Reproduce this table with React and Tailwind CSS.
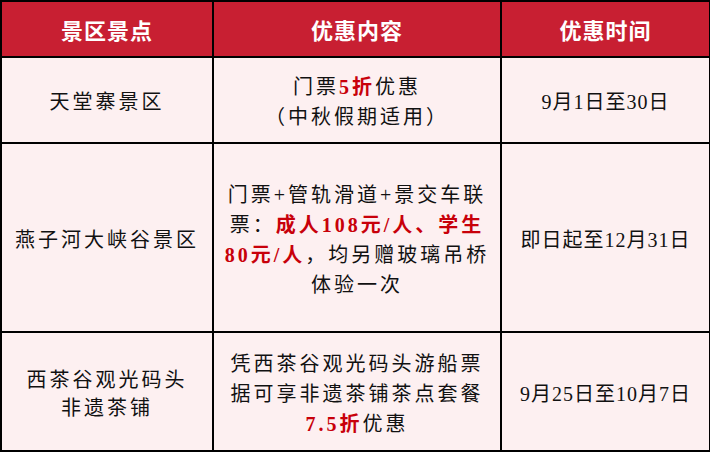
import React from "react";

const Red = ({ children }) => (
  <span className="font-bold text-[#c8000a]">{children}</span>
);

const rows = [
  {
    name: <>天堂寨景区</>,
    deal: (
      <>
        门票<Red>5折</Red>优惠
        <br />
        （中秋假期适用）
      </>
    ),
    time: "9月1日至30日",
    h: "h-[86px]",
  },
  {
    name: <>燕子河大峡谷景区</>,
    deal: (
      <>
        门票+管轨滑道+景交车联
        <br />
        票：<Red>成人108元/人、学生</Red>
        <br />
        <Red>80元/人</Red>，均另赠玻璃吊桥
        <br />
        体验一次
      </>
    ),
    time: "即日起至12月31日",
    h: "h-[189px]",
  },
  {
    name: (
      <>
        西茶谷观光码头
        <br />
        非遗茶铺
      </>
    ),
    deal: (
      <>
        凭西茶谷观光码头游船票
        <br />
        据可享非遗茶铺茶点套餐
        <br />
        <Red>7.5折</Red>优惠
      </>
    ),
    time: "9月25日至10月7日",
    h: "h-[119px]",
  },
];

export default function App() {
  return (
    <div className="w-[710px] h-[452px] bg-white">
      <table className="w-[709px] table-fixed border-collapse border-2 border-black">
        <colgroup>
          <col className="w-[212px]" />
          <col className="w-[288px]" />
          <col className="w-[209px]" />
        </colgroup>
        <thead>
          <tr className="h-[56px] bg-[#c81f32] text-white font-bold text-[22px] tracking-[1px] font-[family-name:'Noto_Sans_CJK_SC',sans-serif]">
            <th className="border-2 border-black">景区景点</th>
            <th className="border-2 border-black">优惠内容</th>
            <th className="border-2 border-black">优惠时间</th>
          </tr>
        </thead>
        <tbody className="bg-[#fdf0f1] text-[#111] text-[20px] tracking-[3px] leading-[30px] font-[family-name:'Liberation_Serif','Noto_Sans_CJK_SC',serif]">
          {rows.map((r, i) => (
            <tr key={i} className={r.h}>
              <td className="border-2 border-black text-center align-middle pt-[4px] leading-[28px]">{r.name}</td>
              <td className="border-2 border-black text-center align-middle pt-[4px]">{r.deal}</td>
              <td className="border-2 border-black text-center align-middle pt-[4px] tracking-[1px]">{r.time}</td>
            </tr>
          ))}
        </tbody>
      </table>
    </div>
  );
}
